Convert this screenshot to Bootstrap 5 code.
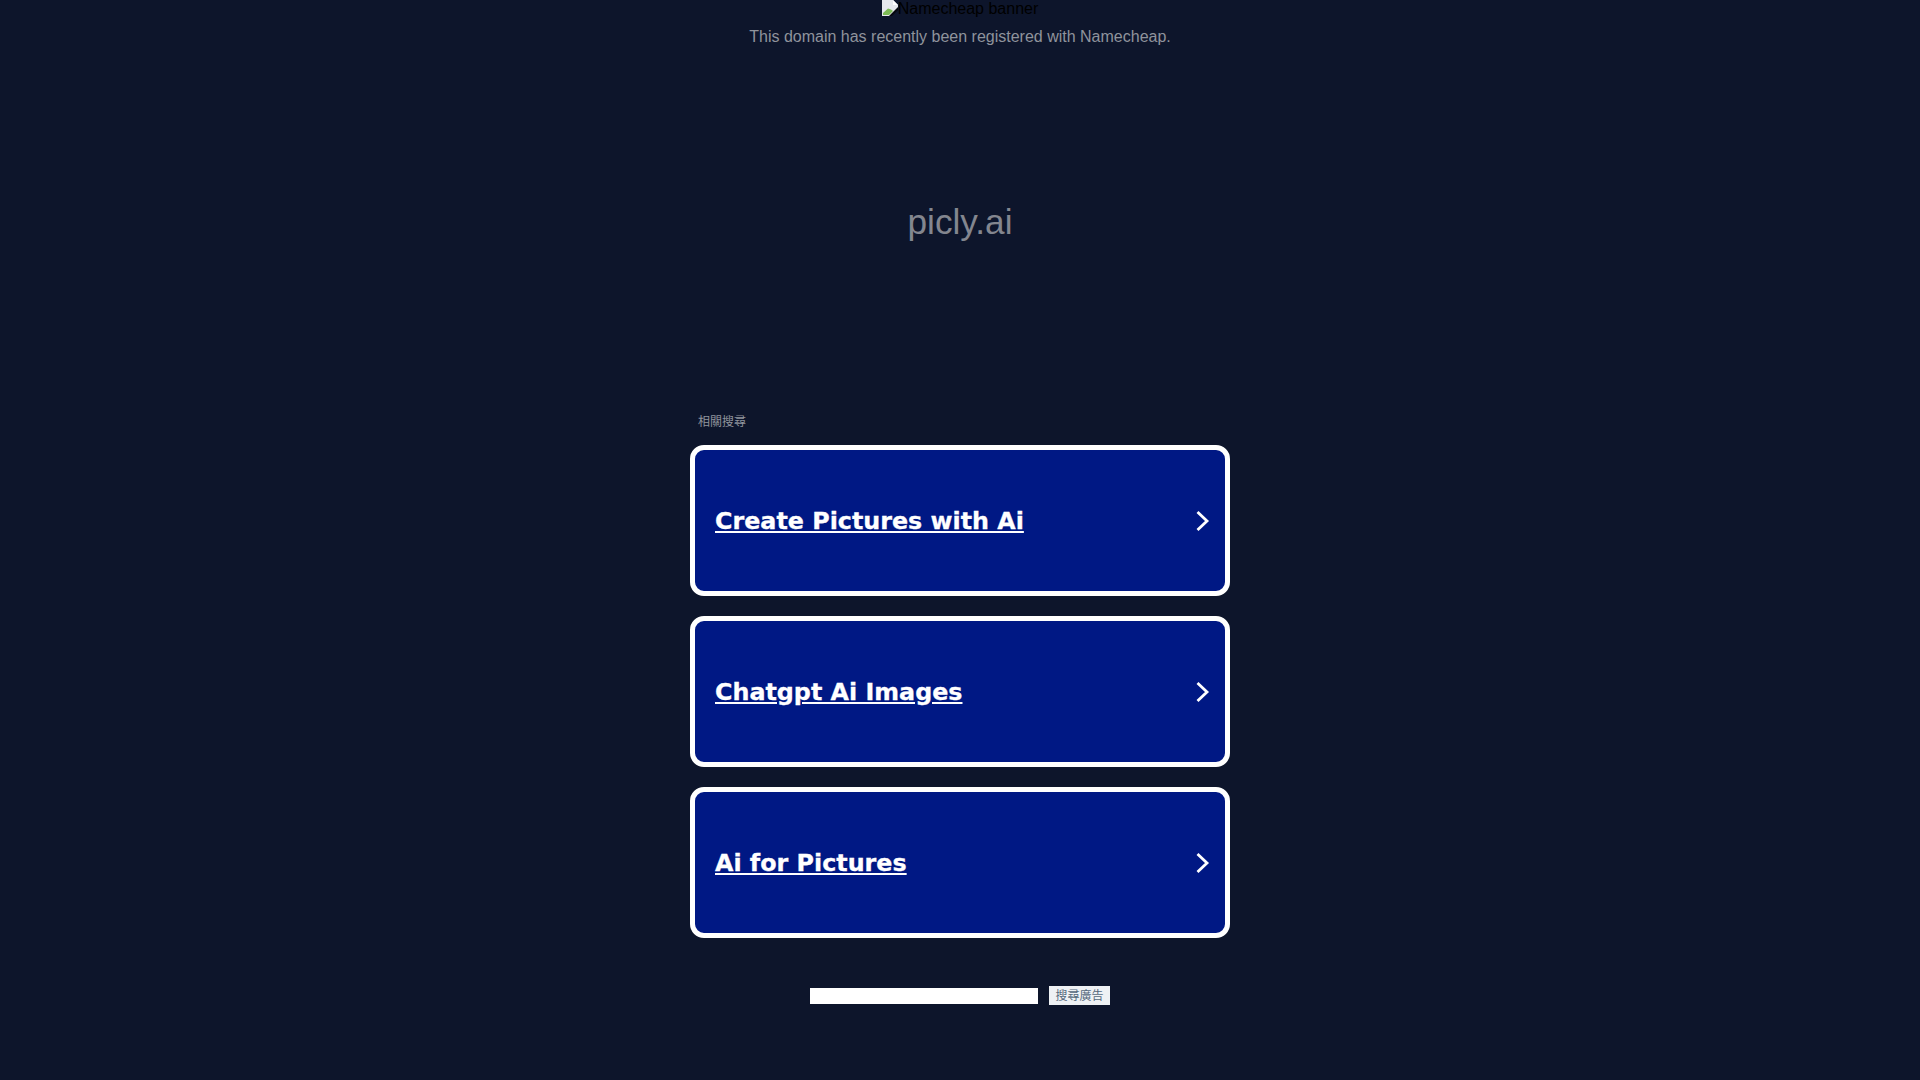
<!DOCTYPE html>
<html lang="zh-Hant">
<head>
<meta charset="utf-8">
<title>picly.ai</title>
<link href="https://cdn.jsdelivr.net/npm/bootstrap@5.3.0/dist/css/bootstrap.min.css" rel="stylesheet">
<style>
html,body{height:100%}
body{background:#0d152b;font-family:"Liberation Sans",Arial,sans-serif;overflow:hidden}
.page-col{width:540px}
.banner-alt{height:17px;font-size:16px;line-height:17px;color:#000;gap:0}
.banner-alt svg{flex:none}
.reg-note{margin-top:11px;height:18px;font-size:16px;line-height:18px;color:#8f939c}
.domain-name{margin-top:154px;height:45px;font-size:35.2px;line-height:44px;color:#83868f}
.related{margin-top:167px;height:20px;padding-left:8px;font-size:12px;line-height:20px;color:#8f939c;font-family:"Liberation Sans","Noto Sans CJK TC",sans-serif}
.link-stack{margin-top:13px;gap:20px}
.ad-box{height:151px;border:5px solid #fff;border-radius:14px;background:#001884;padding:0 15px 0 20px;text-decoration:none}
.ad-title{font-family:"DejaVu Sans",Verdana,sans-serif;font-weight:700;font-size:23.8px;color:#fff;text-decoration:underline;padding-top:2px;-webkit-text-stroke:.3px #fff}
.search-row{margin-top:48px;gap:11px}
.search-input{width:228px;height:16px;border:0;padding:0;background:#fff;display:block}
.search-btn{width:61px;height:19px;border:0;padding:1px 0 0;background:#eef1f4;color:#55697c;font-size:12px;line-height:18px;font-family:"Liberation Sans","Noto Sans CJK TC",sans-serif}
</style>
</head>
<body>
<main class="d-flex flex-column align-items-center">
  <div class="page-col text-center">
    <div class="banner-alt d-flex justify-content-center">
      <svg width="16" height="16" viewBox="0 0 16 16"><path d="M0 0H11L16 5V8L8 16H0Z" fill="#e6e8ec"/><path d="M1 15V13L6 8.5L9 9.5L11 11L7 15Z" fill="#7dbb55"/><path d="M11 0V5H16Z" fill="#fff"/><path d="M16 7L7 16H10L16 10Z" fill="#05070d"/></svg>
      <span>Namecheap banner</span>
    </div>
    <div class="reg-note">This domain has recently been registered with Namecheap.</div>
    <div class="domain-name">picly.ai</div>
  </div>
  <div class="page-col">
    <div class="related">相關搜尋</div>
    <div class="link-stack d-flex flex-column">
      <a class="ad-box d-flex align-items-center justify-content-between" href="#"><span class="ad-title">Create Pictures with Ai</span>
        <svg width="16" height="22" viewBox="0 0 16 22"><path d="M3.5 2L13 11L3.5 20" fill="none" stroke="#fff" stroke-width="2.8"/></svg></a>
      <a class="ad-box d-flex align-items-center justify-content-between" href="#"><span class="ad-title">Chatgpt Ai Images</span>
        <svg width="16" height="22" viewBox="0 0 16 22"><path d="M3.5 2L13 11L3.5 20" fill="none" stroke="#fff" stroke-width="2.8"/></svg></a>
      <a class="ad-box d-flex align-items-center justify-content-between" href="#"><span class="ad-title">Ai for Pictures</span>
        <svg width="16" height="22" viewBox="0 0 16 22"><path d="M3.5 2L13 11L3.5 20" fill="none" stroke="#fff" stroke-width="2.8"/></svg></a>
    </div>
    <div class="search-row d-flex justify-content-center align-items-center">
      <input class="search-input" type="text" aria-label="search">
      <button class="search-btn" type="button">搜尋廣告</button>
    </div>
  </div>
</main>
<script src="https://cdn.jsdelivr.net/npm/bootstrap@5.3.0/dist/js/bootstrap.bundle.min.js"></script>
</body>
</html>
